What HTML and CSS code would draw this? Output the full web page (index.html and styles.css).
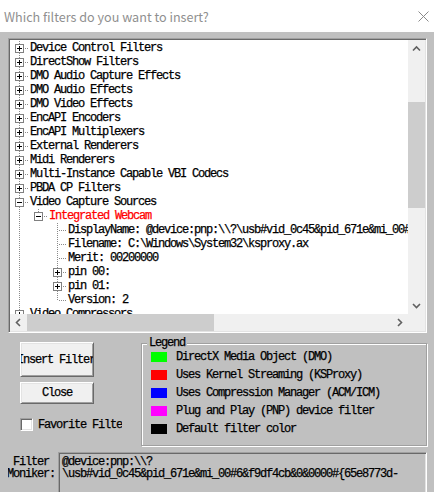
FILE: index.html
```html
<!DOCTYPE html>
<html>
<head>
<meta charset="utf-8">
<title>Insert Filters</title>
<link rel="stylesheet" href="styles.css">
</head>
<body>
<div class="window">
  <div class="titlebar">
    <span class="title">Which filters do you want to insert?</span>
    <svg class="close" width="11" height="11" viewBox="0 0 11 11"><path d="M0.5 0.5 L10.5 10.5 M10.5 0.5 L0.5 10.5" stroke="#8a8a8a" stroke-width="1" fill="none"/></svg>
  </div>
  <div class="client">
    <div class="tree">
      <div class="tree-grid">
        <div class="rows">
          <div class="row"><span class="c t"><span class="bx plus"></span></span><span class="tx">Device Control Filters</span></div>
          <div class="row"><span class="c t"><span class="bx plus"></span></span><span class="tx">DirectShow Filters</span></div>
          <div class="row"><span class="c t"><span class="bx plus"></span></span><span class="tx">DMO Audio Capture Effects</span></div>
          <div class="row"><span class="c t"><span class="bx plus"></span></span><span class="tx">DMO Audio Effects</span></div>
          <div class="row"><span class="c t"><span class="bx plus"></span></span><span class="tx">DMO Video Effects</span></div>
          <div class="row"><span class="c t"><span class="bx plus"></span></span><span class="tx">EncAPI Encoders</span></div>
          <div class="row"><span class="c t"><span class="bx plus"></span></span><span class="tx">EncAPI Multiplexers</span></div>
          <div class="row"><span class="c t"><span class="bx plus"></span></span><span class="tx">External Renderers</span></div>
          <div class="row"><span class="c t"><span class="bx plus"></span></span><span class="tx">Midi Renderers</span></div>
          <div class="row"><span class="c t"><span class="bx plus"></span></span><span class="tx">Multi-Instance Capable VBI Codecs</span></div>
          <div class="row"><span class="c t"><span class="bx plus"></span></span><span class="tx">PBDA CP Filters</span></div>
          <div class="row"><span class="c t"><span class="bx minus"></span></span><span class="tx">Video Capture Sources</span></div>
          <div class="row"><span class="c v"></span><span class="c l"><span class="bx minus"></span></span><span class="tx red">Integrated Webcam</span></div>
          <div class="row"><span class="c v"></span><span class="c"></span><span class="c t"></span><span class="tx">DisplayName: @device:pnp:\\?\usb#vid_0c45&amp;pid_671e&amp;mi_00#6&amp;f9df4cb&amp;0&amp;0000#{65e8773d-8f56-11d0-a3b9-00a0c9223196}\global</span></div>
          <div class="row"><span class="c v"></span><span class="c"></span><span class="c t"></span><span class="tx">Filename: C:\Windows\System32\ksproxy.ax</span></div>
          <div class="row"><span class="c v"></span><span class="c"></span><span class="c t"></span><span class="tx">Merit: 00200000</span></div>
          <div class="row"><span class="c v"></span><span class="c"></span><span class="c t"><span class="bx plus"></span></span><span class="tx">pin 00:</span></div>
          <div class="row"><span class="c v"></span><span class="c"></span><span class="c t"><span class="bx plus"></span></span><span class="tx">pin 01:</span></div>
          <div class="row"><span class="c v"></span><span class="c"></span><span class="c l"></span><span class="tx">Version: 2</span></div>
          <div class="row"><span class="c t"><span class="bx plus"></span></span><span class="tx">Video Compressors</span></div>
        </div>
        <div class="vscroll">
          <div class="sbtn"><svg width="17" height="17" viewBox="0 0 17 17"><path d="M5 10.5 L8.5 7 L12 10.5" fill="none" stroke="#606060" stroke-width="1.6"/></svg></div>
          <div class="vtrack"><div class="vthumb"></div></div>
          <div class="sbtn"><svg width="17" height="17" viewBox="0 0 17 17"><path d="M5 7 L8.5 10.5 L12 7" fill="none" stroke="#606060" stroke-width="1.6"/></svg></div>
        </div>
        <div class="hscroll">
          <div class="sbtn"><svg width="17" height="17" viewBox="0 0 17 17"><path d="M10 5 L6.5 8.5 L10 12" fill="none" stroke="#606060" stroke-width="1.6"/></svg></div>
          <div class="htrack"><div class="hthumb"></div></div>
          <div class="sbtn"><svg width="17" height="17" viewBox="0 0 17 17"><path d="M7 5 L10.5 8.5 L7 12" fill="none" stroke="#606060" stroke-width="1.6"/></svg></div>
        </div>
        <div class="corner"></div>
      </div>
    </div>

    <div class="lower">
      <div class="actions">
        <div class="btn btn-tall"><span>Insert Filter</span></div>
        <div class="btn btn-short"><span>Close</span></div>
        <div class="check-row">
          <span class="checkbox"></span>
          <span class="check-label">Favorite Filter</span>
        </div>
      </div>
      <div class="group">
        <div class="group-title">Legend</div>
        <div class="li"><span class="sw green"></span><span>DirectX Media Object (DMO)</span></div>
        <div class="li"><span class="sw red-sw"></span><span>Uses Kernel Streaming (KSProxy)</span></div>
        <div class="li"><span class="sw blue"></span><span>Uses Compression Manager (ACM/ICM)</span></div>
        <div class="li"><span class="sw magenta"></span><span>Plug and Play (PNP) device filter</span></div>
        <div class="li"><span class="sw black"></span><span>Default filter color</span></div>
      </div>
    </div>

    <div class="moniker">
      <div class="moniker-label"><span>Filter</span><span>Moniker:</span></div>
      <div class="moniker-box">
        <div>@device:pnp:\\?</div>
        <div>\usb#vid_0c45&amp;pid_671e&amp;mi_00#6&amp;f9df4cb&amp;0&amp;0000#{65e8773d-</div>
      </div>
    </div>
  </div>
</div>
</body>
</html>
```

FILE: styles.css
```css
html, body {
  margin: 0;
  padding: 0;
}
body {
  width: 434px;
  height: 492px;
  overflow: hidden;
  background: #c0c0c0;
  font-family: "Liberation Mono", monospace;
  font-size: 12px;
  letter-spacing: -1.2px;
  -webkit-text-stroke: 0.25px #000;
  color: #000;
}
.window {
  width: 434px;
}
.titlebar {
  height: 32px;
  background: #fff;
  display: flex;
  align-items: center;
  padding-left: 4px;
  padding-right: 5px;
  box-sizing: border-box;
}
.title {
  font-family: "Noto Sans CJK SC", "Noto Sans", sans-serif;
  font-size: 12.6px;
  letter-spacing: 0;
  -webkit-text-stroke: 0;
  color: #8f8f8f;
}
.close {
  margin-left: auto;
  display: block;
}
.client {
  padding: 6px 7px 0 8px;
}
.tree {
  width: 419px;
  height: 295px;
  box-sizing: border-box;
  border: 1px solid;
  border-color: #a0a0a0 #fff #fff #a0a0a0;
  padding: 1px;
  box-shadow: inset 1px 1px 0 #696969, inset -1px -1px 0 #e3e3e3;
}
.tree-grid {
  display: grid;
  grid-template-columns: 1fr 17px;
  grid-template-rows: 1fr 17px;
  width: 100%;
  height: 100%;
}
.rows {
  background: #fff;
  overflow: hidden;
  padding-top: 1px;
}
.row {
  display: flex;
  height: 14px;
  line-height: 14px;
  white-space: nowrap;
}
.c {
  flex: none;
  width: 19px;
  height: 14px;
  display: block;
}
.c.v {
  background: repeating-linear-gradient(to bottom, #8a8a8a 0 1px, transparent 1px 2px) 9px 0 / 1px 100% no-repeat;
}
.c.t {
  background:
    repeating-linear-gradient(to bottom, #8a8a8a 0 1px, transparent 1px 2px) 9px 0 / 1px 100% no-repeat,
    repeating-linear-gradient(to right, #8a8a8a 0 1px, transparent 1px 2px) 11px 7px / 8px 1px no-repeat;
}
.c.l {
  background:
    repeating-linear-gradient(to bottom, #8a8a8a 0 1px, transparent 1px 2px) 9px 0 / 1px 8px no-repeat,
    repeating-linear-gradient(to right, #8a8a8a 0 1px, transparent 1px 2px) 11px 7px / 8px 1px no-repeat;
}
.bx {
  display: block;
  width: 9px;
  height: 9px;
  box-sizing: border-box;
  margin: 3px 0 0 5px;
  border: 1px solid #808080;
}
.bx.plus {
  background:
    linear-gradient(#000, #000) center / 5px 1px no-repeat,
    linear-gradient(#000, #000) center / 1px 5px no-repeat,
    #fff;
}
.bx.minus {
  background:
    linear-gradient(#000, #000) center / 5px 1px no-repeat,
    #fff;
}
.tx {
  padding-left: 1px;
}
.tx.red {
  color: #ff0000;
  -webkit-text-stroke-color: #ff0000;
}
.vscroll {
  background: #f0f0f0;
  display: flex;
  flex-direction: column;
}
.sbtn {
  flex: none;
  width: 17px;
  height: 17px;
}
.sbtn svg {
  display: block;
}
.vtrack {
  flex: 1;
  padding-top: 45px;
}
.vthumb {
  height: 106px;
  background: #cdcdcd;
}
.hscroll {
  background: #f0f0f0;
  display: flex;
}
.htrack {
  flex: 1;
}
.hthumb {
  width: 187px;
  height: 17px;
  background: #cdcdcd;
}
.corner {
  background: #f0f0f0;
}
.lower {
  display: flex;
  align-items: flex-start;
}
.actions {
  padding: 9px 0 0 12px;
  width: 74px;
  flex: none;
  display: flex;
  flex-direction: column;
}
.btn {
  width: 74px;
  box-sizing: border-box;
  background: #f0f0f0;
  border: 1px solid;
  border-color: #fff #696969 #696969 #fff;
  box-shadow: inset 1px 1px 0 #e3e3e3, inset -1px -1px 0 #a0a0a0;
  display: flex;
  align-items: center;
  justify-content: center;
  overflow: hidden;
  white-space: nowrap;
}
.btn span {
  flex: none;
}
.btn-tall {
  height: 35px;
}
.btn-tall span {
  margin-right: 2px;
}
.btn-short {
  height: 22px;
  margin-top: 5px;
}
.check-row {
  margin-top: 14px;
  display: flex;
  align-items: center;
  width: 102px;
  height: 13px;
  white-space: nowrap;
}
.checkbox {
  flex: none;
  width: 13px;
  height: 13px;
  box-sizing: border-box;
  background: #fff;
  border: 1px solid;
  border-color: #a0a0a0 #fff #fff #a0a0a0;
  box-shadow: inset 1px 1px 0 #696969, inset -1px -1px 0 #e3e3e3;
}
.check-label {
  flex: none;
  margin-left: 5px;
  width: 84px;
  overflow: hidden;
  line-height: 14px;
}
.group {
  margin: 10px 0 0 47px;
  width: 286px;
  height: 103px;
  flex: none;
  box-sizing: border-box;
  border: 1px solid #a0a0a0;
  box-shadow: 1px 1px 0 #fff, inset 1px 1px 0 #fff;
  padding: 0 0 0 9px;
  display: flex;
  flex-direction: column;
  align-items: flex-start;
}
.group-title {
  margin: -8px 0 0 -4px;
  padding: 0 2px;
  background: #c0c0c0;
  line-height: 14px;
  height: 14px;
}
.li {
  display: flex;
  align-items: center;
  height: 14px;
  line-height: 14px;
  margin-top: 4px;
  white-space: nowrap;
}
.group-title + .li {
  margin-top: 0;
}
.sw {
  flex: none;
  width: 16px;
  height: 10px;
  margin-right: 9px;
}
.green { background: #00ff00; }
.red-sw { background: #ff0000; }
.blue { background: #0000ff; }
.magenta { background: #ff00ff; }
.black { background: #000000; }
.moniker {
  display: flex;
  margin-top: 6px;
}
.moniker-label {
  width: 46px;
  flex: none;
  display: flex;
  flex-direction: column;
  align-items: center;
  padding-top: 4px;
  line-height: 12px;
  white-space: nowrap;
  overflow: hidden;
}
.moniker-label span {
  flex: none;
}
.moniker-box {
  margin-left: 4px;
  width: 369px;
  height: 46px;
  flex: none;
  box-sizing: border-box;
  border: 1px solid;
  border-color: #a0a0a0 #fff #fff #a0a0a0;
  box-shadow: inset 1px 1px 0 #696969, inset -1px -1px 0 #e3e3e3;
  padding: 3px 2px 0 3px;
  line-height: 12px;
  white-space: nowrap;
  overflow: hidden;
}
```
